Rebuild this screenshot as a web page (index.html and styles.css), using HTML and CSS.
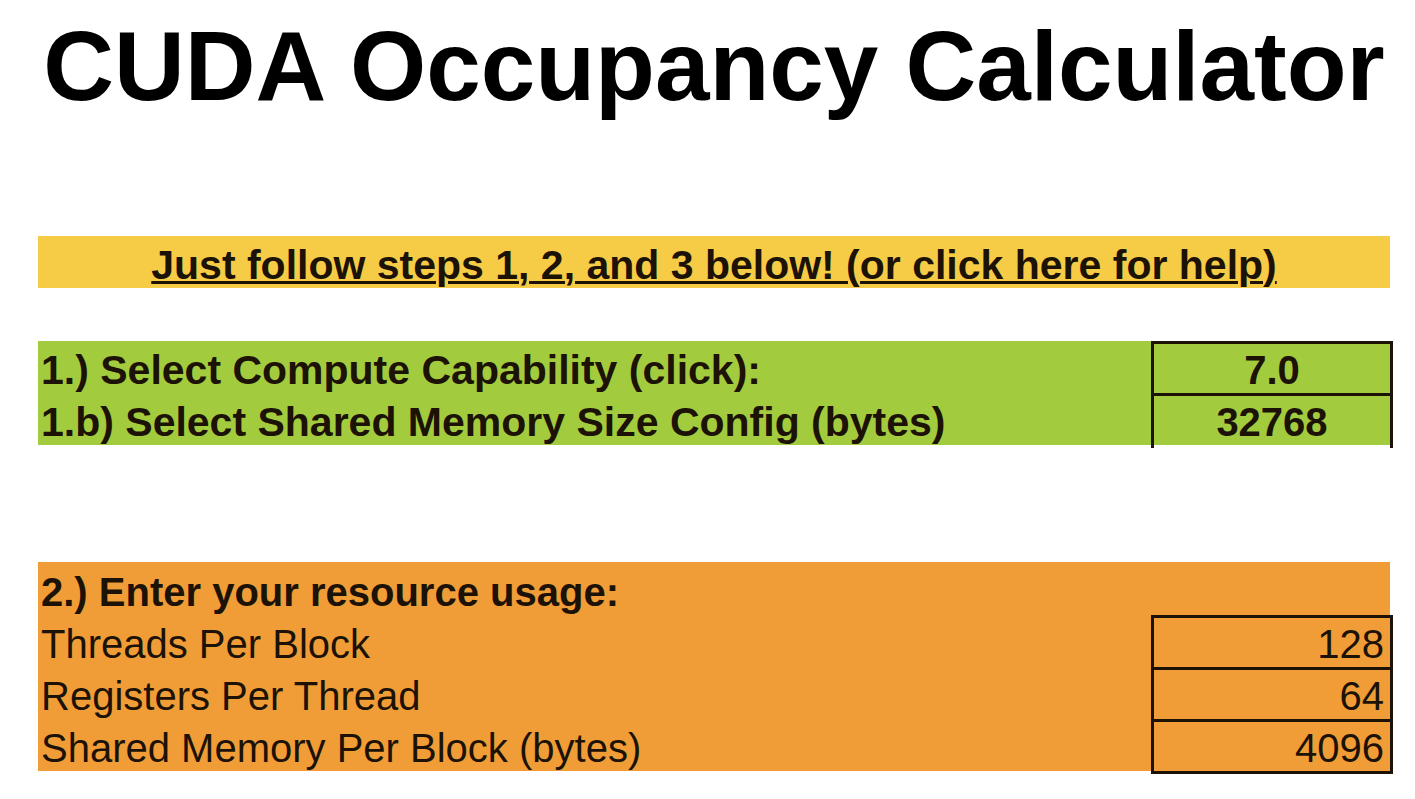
FILE: index.html
```html
<!DOCTYPE html>
<html lang="en">
<head>
<meta charset="utf-8">
<title>CUDA Occupancy Calculator</title>
<link rel="stylesheet" href="styles.css">
</head>
<body>
<main class="sheet">
  <h1 class="title">CUDA Occupancy Calculator</h1>
  <div class="banner"><a class="help" href="#help">Just follow steps 1, 2, and 3 below! (or click here for help)</a></div>
  <form>
    <section class="group capability">
      <div class="row bold">
        <label for="cc">1.) Select Compute Capability (click):</label>
        <select class="cell center" id="cc"><option>7.0</option></select>
      </div>
      <div class="row bold">
        <label for="smem-config">1.b) Select Shared Memory Size Config (bytes)</label>
        <select class="cell center open" id="smem-config"><option>32768</option></select>
      </div>
    </section>
    <section class="group resources">
      <h2 class="row heading">2.) Enter your resource usage:</h2>
      <div class="row">
        <label for="threads">Threads Per Block</label>
        <input class="cell number" id="threads" type="text" value="128">
      </div>
      <div class="row">
        <label for="registers">Registers Per Thread</label>
        <input class="cell number" id="registers" type="text" value="64">
      </div>
      <div class="row">
        <label for="shared">Shared Memory Per Block (bytes)</label>
        <input class="cell number" id="shared" type="text" value="4096">
      </div>
    </section>
  </form>
</main>
</body>
</html>
```

FILE: styles.css
```css
* {
  box-sizing: border-box;
}

body {
  margin: 0;
  background: #fff;
  color: #1c1206;
  font-family: "Liberation Sans", Arial, sans-serif;
  font-size: 40px;
  line-height: 52px;
}

.sheet {
  padding: 10px 25px 24px 38px;
}

.title {
  margin: 0 0 114px;
  color: #000;
  font-size: 98px;
  line-height: 112px;
  text-align: center;
  white-space: nowrap;
}

.banner {
  height: 52px;
  margin-bottom: 53px;
  padding-top: 3px;
  background: #f6cb46;
  font-size: 41px;
  font-weight: bold;
  text-align: center;
}

.help {
  color: inherit;
  text-decoration-thickness: 3px;
}

.group {
  padding-left: 3px;
}

.capability {
  margin-bottom: 117px;
  background: #a2cc3e;
}

.resources {
  background: #f09d38;
}

.row {
  display: flex;
  justify-content: space-between;
  height: 52px;
  margin: 0;
  font-size: 40px;
  white-space: nowrap;
}

.row label {
  padding-top: 3px;
}

.bold {
  font-size: 41px;
  font-weight: bold;
}

.heading {
  height: 53px;
  padding-top: 4px;
}

.cell {
  appearance: none;
  width: 242px;
  height: 55px;
  margin: 0 -3px 0 0;
  padding: 3px 6px 0;
  border: 3px solid #1c1206;
  border-radius: 0;
  background: transparent;
  color: inherit;
  font: inherit;
  font-size: 40px;
  line-height: 46px;
}

.center {
  text-align: center;
  text-align-last: center;
}

.open {
  padding-top: 0;
  border-bottom: 0;
}

.number {
  text-align: right;
}
```
